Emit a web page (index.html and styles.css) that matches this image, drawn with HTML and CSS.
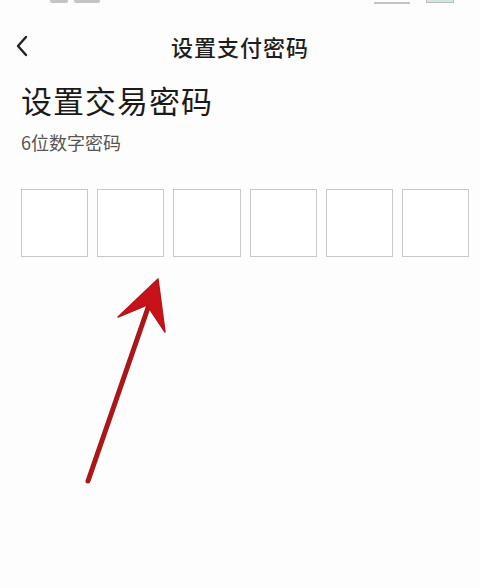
FILE: index.html
```html
<!DOCTYPE html>
<html lang="zh">
<head>
<meta charset="utf-8">
<link rel="stylesheet" href="styles.css">
</head>
<body>
<div class="page">
  <div class="status">
    <span class="time"><span class="bit"></span><span class="bit wide"></span></span>
    <span class="icons"><span class="sig"></span><span class="bat"></span></span>
  </div>
  <div class="nav">
    <svg class="back" width="14" height="22" viewBox="0 0 14 22"><path d="M11 2 L3 11 L11 20" fill="none" stroke="#222" stroke-width="2.4" stroke-linecap="round" stroke-linejoin="round"/></svg>
    <div class="title">设置支付密码</div>
  </div>
  <div class="content">
    <h1 class="heading">设置交易密码</h1>
    <p class="sub">6位数字密码</p>
    <div class="boxes">
      <div class="box"></div>
      <div class="box"></div>
      <div class="box"></div>
      <div class="box"></div>
      <div class="box"></div>
      <div class="box"></div>
    </div>
  </div>
  <svg class="arrow" width="480" height="588" viewBox="0 0 480 588">
    <line x1="88" y1="481" x2="150" y2="302" stroke="#a9171a" stroke-width="5" stroke-linecap="round"/>
    <path d="M158 279 L118 317 L147 305 L165 332 Z" fill="#c8121a" stroke="#b3161a" stroke-width="1.5" stroke-linejoin="round"/>
  </svg>
</div>
</body>
</html>
```
FILE: styles.css
```css
html, body {
  margin: 0;
  padding: 0;
  background: #fdfdfd;
}
body {
  font-family: "Noto Sans CJK SC", "Noto Sans", sans-serif;
  color: #222;
}
.page {
  position: relative;
  width: 480px;
  height: 588px;
  overflow: hidden;
}
.status {
  height: 20px;
  display: flex;
  justify-content: space-between;
  align-items: flex-start;
  padding: 0 26px 0 50px;
  overflow: hidden;
}
.time {
  display: flex;
  gap: 6px;
}
.bit {
  width: 18px;
  height: 3px;
  background: #c4c4c4;
  border-radius: 0 0 2px 2px;
}
.bit.wide {
  width: 26px;
}
.icons {
  display: flex;
  gap: 16px;
  margin-top: -10px;
}
.sig {
  width: 36px;
  height: 12px;
  border-bottom: 2px solid #c4c4c4;
}
.bat {
  width: 26px;
  height: 12px;
  background: #cfe9e0;
  border: 1px solid #bbb;
  border-top: none;
}
.nav {
  position: relative;
  height: 52px;
  display: flex;
  align-items: center;
  justify-content: center;
}
.back {
  position: absolute;
  left: 15px;
  top: 15px;
}
.title {
  font-size: 22px;
  font-weight: 500;
  letter-spacing: 1px;
  color: #1e1e1e;
}
.content {
  padding: 8px 11px 0 21px;
}
.heading {
  margin: 0;
  font-size: 31px;
  line-height: 40px;
  font-weight: 400;
  letter-spacing: 1px;
  color: #1a1a1a;
}
.sub {
  margin: 9px 0 0 0;
  font-size: 18px;
  line-height: 26px;
  color: #555;
}
.boxes {
  margin-top: 34px;
  display: flex;
  gap: 9px;
}
.box {
  width: 66px;
  height: 66px;
  border: 1px solid #c9c9c9;
  background: #fff;
}
.arrow {
  position: absolute;
  left: 0;
  top: 0;
  pointer-events: none;
}
```
